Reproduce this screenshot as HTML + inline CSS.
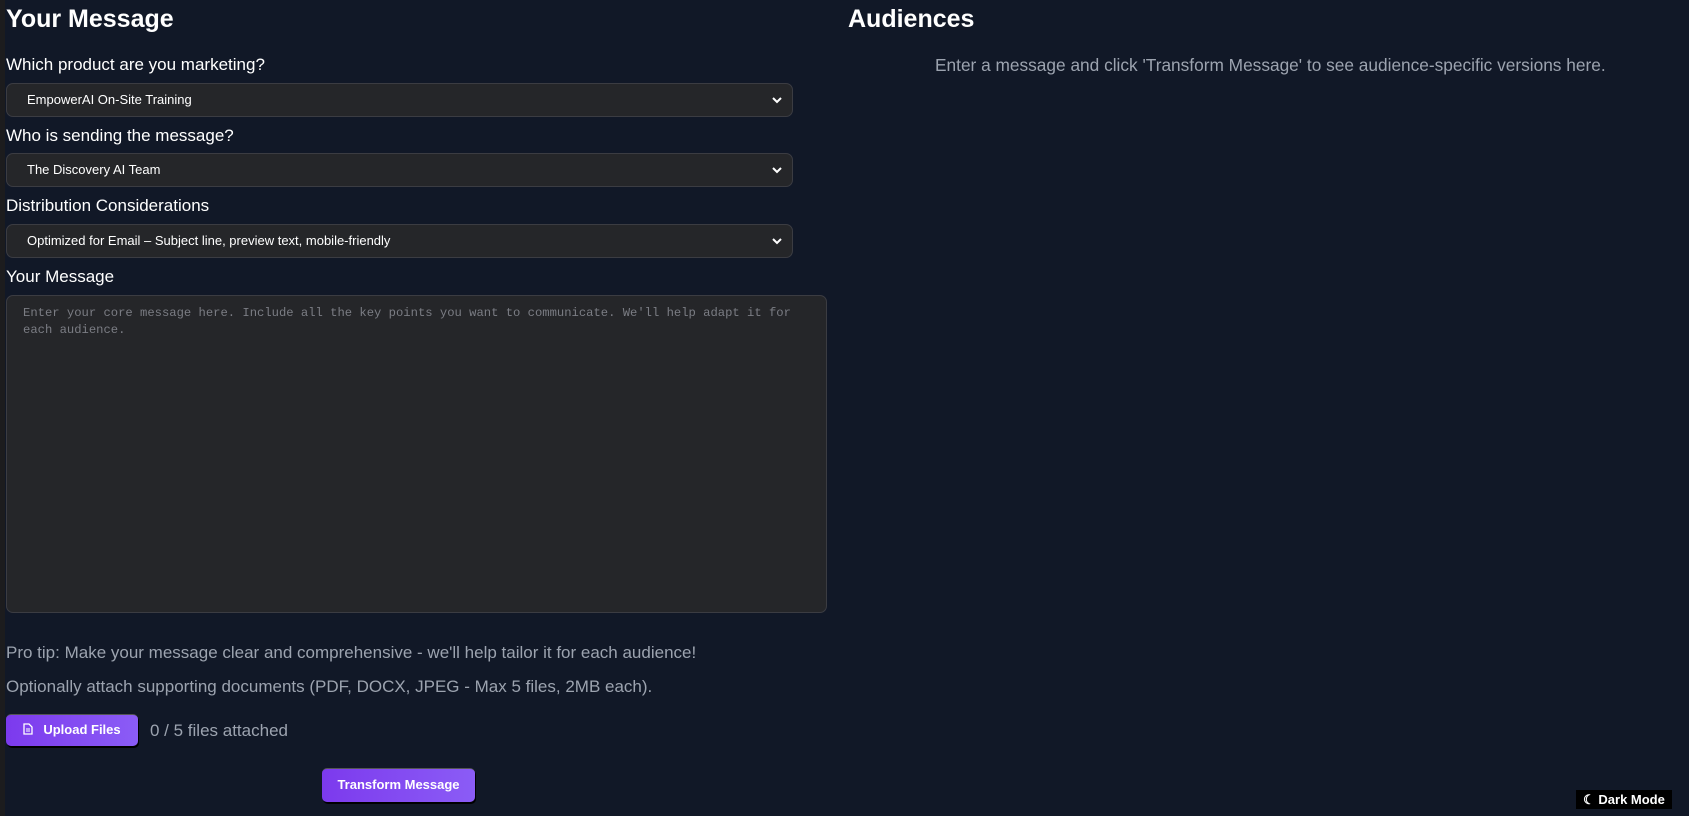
<!DOCTYPE html>
<html><head><meta charset="utf-8"><style>
html,body{margin:0;padding:0;width:1689px;height:816px;overflow:hidden;background:#111827;font-family:"Liberation Sans",sans-serif;color:#fff}
.strip{position:absolute;left:0;top:0;width:5px;height:816px;background:#1c1c1e}
.abs{position:absolute}
h1{position:absolute;margin:0;font-size:25px;font-weight:bold;line-height:30px}
.lbl{position:absolute;left:6px;font-size:17px;line-height:20px;color:#fff}
.sel{position:absolute;left:6px;width:787px;height:34px;background:#252629;border:1px solid #3b3c42;border-radius:7px;box-sizing:border-box;font-size:13px;line-height:32px;padding-left:20px;color:#fff}
.sel svg{position:absolute;right:10px;top:13px}
.ta{position:absolute;left:6px;top:295px;width:821px;height:318px;background:#252629;border:1px solid #3b3c42;border-radius:7px;box-sizing:border-box;padding:9px 16px;font-family:"Liberation Mono",monospace;font-size:12.2px;line-height:17px;color:#7b7d84}
.gray{position:absolute;color:#9ca3af;font-size:17px;line-height:20px}
.btn{position:absolute;background:linear-gradient(90deg,#7c3aed,#8b5cf6);border-radius:5px;box-shadow:1px 2px 0 #000;border-top:1px solid #555;color:#fff;font-size:13px;font-weight:bold;box-sizing:border-box;text-align:center}
</style></head><body>
<div class="strip"></div>
<h1 style="left:6px;top:4px">Your Message</h1>
<h1 style="left:848px;top:4px">Audiences</h1>
<div class="lbl" style="top:55px">Which product are you marketing?</div>
<div class="sel" style="top:83px">EmpowerAI On-Site Training<svg width="10" height="7" viewBox="0 0 10 7"><path d="M1 1l4 4 4-4" stroke="#fff" stroke-width="2" fill="none"/></svg></div>
<div class="lbl" style="top:126px">Who is sending the message?</div>
<div class="sel" style="top:153px">The Discovery AI Team<svg width="10" height="7" viewBox="0 0 10 7"><path d="M1 1l4 4 4-4" stroke="#fff" stroke-width="2" fill="none"/></svg></div>
<div class="lbl" style="top:196px">Distribution Considerations</div>
<div class="sel" style="top:224px">Optimized for Email – Subject line, preview text, mobile-friendly<svg width="10" height="7" viewBox="0 0 10 7"><path d="M1 1l4 4 4-4" stroke="#fff" stroke-width="2" fill="none"/></svg></div>
<div class="lbl" style="top:267px">Your Message</div>
<div class="ta">Enter your core message here. Include all the key points you want to communicate. We'll help adapt it for each audience.</div>
<div class="gray" style="left:6px;top:643px">Pro tip: Make your message clear and comprehensive - we'll help tailor it for each audience!</div>
<div class="gray" style="left:6px;top:677px">Optionally attach supporting documents (PDF, DOCX, JPEG - Max 5 files, 2MB each).</div>
<div class="btn" style="left:6px;top:714px;width:132px;height:32px;line-height:30px"><svg width="10" height="12" viewBox="0 0 10 12" style="vertical-align:-1px;margin-right:10px"><path d="M1 1h5l3 3v7H1z" fill="none" stroke="#fff" stroke-width="1.3"/><path d="M3 6h4M3 8h4" stroke="#fff"/></svg>Upload Files</div>
<div class="gray" style="left:150px;top:721px;font-size:17px">0 / 5 files attached</div>
<div class="btn" style="left:322px;top:768px;width:153px;height:34px;line-height:32px">Transform Message</div>
<div class="gray" style="left:935px;top:55px;font-size:17.3px">Enter a message and click 'Transform Message' to see audience-specific versions here.</div>
<div class="abs" style="left:1576px;top:790px;width:96px;height:19px;background:#000;color:#fff;font-size:13px;font-weight:bold;line-height:19px;text-align:center">☾ Dark Mode</div>
</body></html>
